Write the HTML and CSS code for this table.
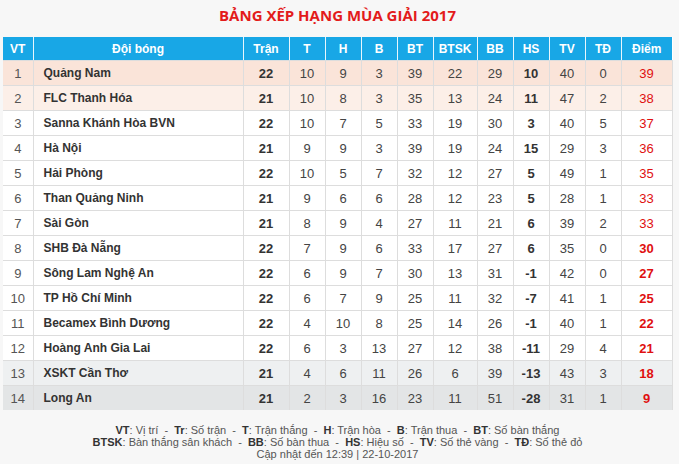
FILE: index.html
```html
<!DOCTYPE html>
<html lang="vi">
<head>
<meta charset="utf-8">
<title>Bảng xếp hạng</title>
<link rel="stylesheet" href="styles.css">
</head>
<body>
<div class="wrap">
  <h1 class="title">BẢNG XẾP HẠNG MÙA GIẢI 2017</h1>
  <table class="standings">
    <colgroup>
      <col class="c-vt"><col class="c-team"><col class="c-tran"><col class="c-n"><col class="c-n"><col class="c-n"><col class="c-n"><col class="c-btsk"><col class="c-n"><col class="c-n"><col class="c-n"><col class="c-n"><col class="c-pts">
    </colgroup>
    <thead>
      <tr><th>VT</th><th>Đội bóng</th><th>Trận</th><th>T</th><th>H</th><th>B</th><th>BT</th><th>BTSK</th><th>BB</th><th>HS</th><th>TV</th><th>TĐ</th><th>Điểm</th></tr>
    </thead>
    <tbody>
      <tr class="r1"><td>1</td><td class="team">Quảng Nam</td><td class="b">22</td><td>10</td><td>9</td><td>3</td><td>39</td><td>22</td><td>29</td><td class="b">10</td><td>40</td><td>0</td><td class="pts">39</td></tr>
      <tr class="r2"><td>2</td><td class="team">FLC Thanh Hóa</td><td class="b">21</td><td>10</td><td>8</td><td>3</td><td>35</td><td>13</td><td>24</td><td class="b">11</td><td>47</td><td>2</td><td class="pts">38</td></tr>
      <tr><td>3</td><td class="team">Sanna Khánh Hòa BVN</td><td class="b">22</td><td>10</td><td>7</td><td>5</td><td>33</td><td>19</td><td>30</td><td class="b">3</td><td>40</td><td>5</td><td class="pts">37</td></tr>
      <tr><td>4</td><td class="team">Hà Nội</td><td class="b">21</td><td>9</td><td>9</td><td>3</td><td>39</td><td>19</td><td>24</td><td class="b">15</td><td>29</td><td>3</td><td class="pts">36</td></tr>
      <tr><td>5</td><td class="team">Hải Phòng</td><td class="b">22</td><td>10</td><td>5</td><td>7</td><td>32</td><td>12</td><td>27</td><td class="b">5</td><td>49</td><td>1</td><td class="pts">35</td></tr>
      <tr><td>6</td><td class="team">Than Quảng Ninh</td><td class="b">21</td><td>9</td><td>6</td><td>6</td><td>28</td><td>12</td><td>23</td><td class="b">5</td><td>28</td><td>1</td><td class="pts">33</td></tr>
      <tr><td>7</td><td class="team">Sài Gòn</td><td class="b">21</td><td>8</td><td>9</td><td>4</td><td>27</td><td>11</td><td>21</td><td class="b">6</td><td>39</td><td>2</td><td class="pts">33</td></tr>
      <tr><td>8</td><td class="team">SHB Đà Nẵng</td><td class="b">22</td><td>7</td><td>9</td><td>6</td><td>33</td><td>17</td><td>27</td><td class="b">6</td><td>35</td><td>0</td><td class="pts b">30</td></tr>
      <tr><td>9</td><td class="team">Sông Lam Nghệ An</td><td class="b">22</td><td>6</td><td>9</td><td>7</td><td>30</td><td>13</td><td>31</td><td class="b">-1</td><td>42</td><td>0</td><td class="pts b">27</td></tr>
      <tr><td>10</td><td class="team">TP Hồ Chí Minh</td><td class="b">22</td><td>6</td><td>7</td><td>9</td><td>25</td><td>11</td><td>32</td><td class="b">-7</td><td>41</td><td>1</td><td class="pts b">25</td></tr>
      <tr><td>11</td><td class="team">Becamex Bình Dương</td><td class="b">22</td><td>4</td><td>10</td><td>8</td><td>25</td><td>14</td><td>26</td><td class="b">-1</td><td>40</td><td>1</td><td class="pts b">22</td></tr>
      <tr><td>12</td><td class="team">Hoàng Anh Gia Lai</td><td class="b">22</td><td>6</td><td>3</td><td>13</td><td>27</td><td>12</td><td>38</td><td class="b">-11</td><td>29</td><td>4</td><td class="pts b">21</td></tr>
      <tr class="r13"><td>13</td><td class="team">XSKT Cần Thơ</td><td class="b">21</td><td>4</td><td>6</td><td>11</td><td>26</td><td>6</td><td>39</td><td class="b">-13</td><td>43</td><td>3</td><td class="pts b">18</td></tr>
      <tr class="r14"><td>14</td><td class="team">Long An</td><td class="b">21</td><td>2</td><td>3</td><td>16</td><td>23</td><td>11</td><td>51</td><td class="b">-28</td><td>31</td><td>1</td><td class="pts b">9</td></tr>
    </tbody>
  </table>
  <div class="legend">
    <p><b>VT</b>: Vị trí &nbsp;-&nbsp; <b>Tr</b>: Số trận &nbsp;-&nbsp; <b>T</b>: Trận thắng &nbsp;-&nbsp; <b>H</b>: Trận hòa &nbsp;-&nbsp; <b>B</b>: Trận thua &nbsp;-&nbsp; <b>BT</b>: Số bàn thắng</p>
    <p><b>BTSK</b>: Bàn thắng sân khách &nbsp;-&nbsp; <b>BB</b>: Số bàn thua &nbsp;-&nbsp; <b>HS</b>: Hiệu số &nbsp;-&nbsp; <b>TV</b>: Số thẻ vàng &nbsp;-&nbsp; <b>TĐ</b>: Số thẻ đỏ</p>
    <p>Cập nhật đến 12:39 | 22-10-2017</p>
  </div>
</div>
</body>
</html>
```

FILE: styles.css
```css
html, body {
  margin: 0;
  padding: 0;
  background: #f7f7f7;
}
body {
  font-family: "Liberation Sans", Arial, sans-serif;
  color: #333;
}
.wrap {
  width: 669px;
  padding: 0 3px;
}
.title {
  margin: 0;
  height: 37px;
  line-height: 31px;
  text-align: center;
  font-family: "Open Sans", "Liberation Sans", sans-serif;
  font-size: 15px;
  font-weight: 700;
  color: #e31b1b;
}
.standings {
  width: 669px;
  table-layout: fixed;
  border-collapse: collapse;
  background: #fff;
  font-size: 13px;
}
.c-vt { width: 30px; }
.c-team { width: 210px; }
.c-tran { width: 46px; }
.c-n { width: 36px; }
.c-btsk { width: 44px; }
.c-pts { width: 51px; }
.standings th {
  height: 23px;
  padding: 0;
  background: #18a7e6;
  color: #fff;
  font-weight: 700;
  font-size: 12px;
  border-left: 1px solid #e8f6fd;
  border-bottom: 1px solid #ddd;
  text-align: center;
}
.standings th:first-child { border-left: none; }
.standings td {
  height: 24px;
  padding: 0;
  border: 1px solid #ddd;
  text-align: center;
  color: #444;
}
.standings tr td:first-child { border-left: none; color: #555; }
.standings td.team {
  text-align: left;
  padding-left: 10px;
  font-size: 12px;
  font-weight: 700;
  color: #333;
}
.standings td.b { font-weight: 700; color: #333; }
.standings td.pts { color: #e01010; }
.standings td.pts.b { color: #e01010; }
.standings tr.r1 td { background: #fae4d9; }
.standings tr.r2 td { background: #fcefe8; }
.standings tr.r13 td { background: #eef0f1; }
.standings tr.r14 td { background: #e3e5e6; border-bottom: none; }
.legend {
  margin-top: 14px;
  text-align: center;
  font-size: 11px;
  line-height: 12.2px;
  color: #555;
}
.legend p { margin: 0; }
.legend b { color: #333; }
```
